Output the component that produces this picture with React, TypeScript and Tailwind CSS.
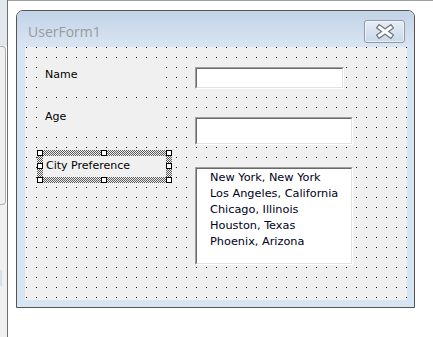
import React from "react";

function Sunken({ className, children }: { className: string; children?: React.ReactNode }) {
  return (
    <div className={`absolute border border-t-[#a0a0a0] border-l-[#a0a0a0] border-r-white border-b-white ${className}`}>
      <div className="w-full h-full border border-t-[#696969] border-l-[#696969] border-r-[#e3e3e3] border-b-[#e3e3e3] bg-white">
        {children}
      </div>
    </div>
  );
}

function Handle() {
  return <div className="w-[6px] h-[6px] bg-white border border-black" />;
}

export default function App() {
  const items = [
    "New York, New York",
    "Los Angeles, California",
    "Chicago, Illinois",
    "Houston, Texas",
    "Phoenix, Arizona",
  ];
  return (
    <div className="w-[433px] h-[337px] bg-white flex overflow-hidden font-['DejaVu_Sans',sans-serif] text-black">
      {/* left strip */}
      <div className="w-[7px] h-full flex flex-col bg-[#f0f0f0] shrink-0">
        <div className="h-[46px] bg-[#e3e8ee]" />
        <div className="h-[159px] w-[7px] flex">
          <div className="w-[6px] h-full bg-[#f0f0f0] border-r border-b border-t border-[#b0b0b0] rounded-r-[4px]" />
          <div className="w-px h-full bg-white" />
        </div>
        <div className="h-[65px]" />
        <div className="h-[16px] w-[2px] bg-[#d4e1ee]" />
      </div>
      <div className="w-px h-full bg-[#707070] shrink-0" />
      {/* main */}
      <div className="flex-1 border-t border-[#a0a0a0] pl-[8px] pt-[9px]">
        <div className="w-[399px] h-[298px] border border-[#555555] rounded-t-[7px] bg-[#d7e4f2] flex flex-col overflow-hidden">
          {/* title bar */}
          <div className="h-[36px] flex items-start bg-gradient-to-b from-[#c2d3e7] to-[#d9e5f3] shrink-0">
            <div className="ml-[11px] mt-[11px] leading-[19px] text-[14px] text-[#9a9a9a] font-['Open_Sans',sans-serif]">
              UserForm1
            </div>
            <div className="ml-auto mr-[9px] mt-[9px] w-[41px] h-[23px] rounded-[3px] border border-[#8e9aab] bg-gradient-to-b from-[#e6edf5] to-[#cad8e8] flex items-center justify-center shadow-[inset_0_0_0_1px_rgba(255,255,255,0.6)]">
              <svg width="20" height="15" viewBox="0 0 20 15">
                <path d="M4.5 3.5 L15.5 11.5 M15.5 3.5 L4.5 11.5" stroke="#6b7787" strokeWidth="5.4" strokeLinecap="square" fill="none" />
                <path d="M4.5 3.5 L15.5 11.5 M15.5 3.5 L4.5 11.5" stroke="#ffffff" strokeWidth="3" strokeLinecap="square" fill="none" />
              </svg>
            </div>
          </div>
          {/* client row */}
          <div className="flex pl-[8px]">
            <div className="relative w-[382px] h-[253px] bg-[#f0f0f0] [background-image:conic-gradient(from_270deg_at_1px_1px,#000_90deg,transparent_0)] [background-size:10px_10px] [background-position:1px_0px]">
              {/* Name label */}
              <div className="absolute left-[12px] top-[13px] w-[126px] h-[32px] bg-[#f0f0f0] pl-[8px] pt-[8px] text-[11px] leading-[13px]">
                Name
              </div>
              {/* Age label */}
              <div className="absolute left-[12px] top-[56px] w-[121px] h-[28px] bg-[#f0f0f0] pl-[8px] pt-[7px] text-[11px] leading-[13px]">
                Age
              </div>
              {/* City Preference selected label */}
              <div className="absolute left-[12px] top-[103px] w-[135px] h-[33px] p-[6px] [background-image:conic-gradient(#5a5a5a_25%,#f0f0f0_0_50%,#5a5a5a_0_75%,#f0f0f0_0)] [background-size:2px_2px]">
                <div className="w-full h-full bg-[#f0f0f0] pl-[3px] pt-[3px] text-[11px] leading-[13px] whitespace-nowrap">
                  City Preference
                </div>
                <div className="absolute left-0 top-0"><Handle /></div>
                <div className="absolute left-[64px] top-0"><Handle /></div>
                <div className="absolute right-0 top-0"><Handle /></div>
                <div className="absolute left-0 top-[13px]"><Handle /></div>
                <div className="absolute right-0 top-[13px]"><Handle /></div>
                <div className="absolute left-0 bottom-0"><Handle /></div>
                <div className="absolute left-[64px] bottom-0"><Handle /></div>
                <div className="absolute right-0 bottom-0"><Handle /></div>
              </div>
              {/* Text boxes */}
              <Sunken className="left-[170px] top-[20px] w-[149px] h-[22px]" />
              <Sunken className="left-[170px] top-[70px] w-[158px] h-[28px]" />
              {/* List box */}
              <Sunken className="left-[170px] top-[120px] w-[158px] h-[98px]">
                <div className="pl-[13px] pt-[1px] text-[11.3px] leading-[16px] text-[#000020]">
                  {items.map((it) => (
                    <div key={it} className="whitespace-nowrap">{it}</div>
                  ))}
                </div>
              </Sunken>
            </div>
          </div>
        </div>
      </div>
    </div>
  );
}
